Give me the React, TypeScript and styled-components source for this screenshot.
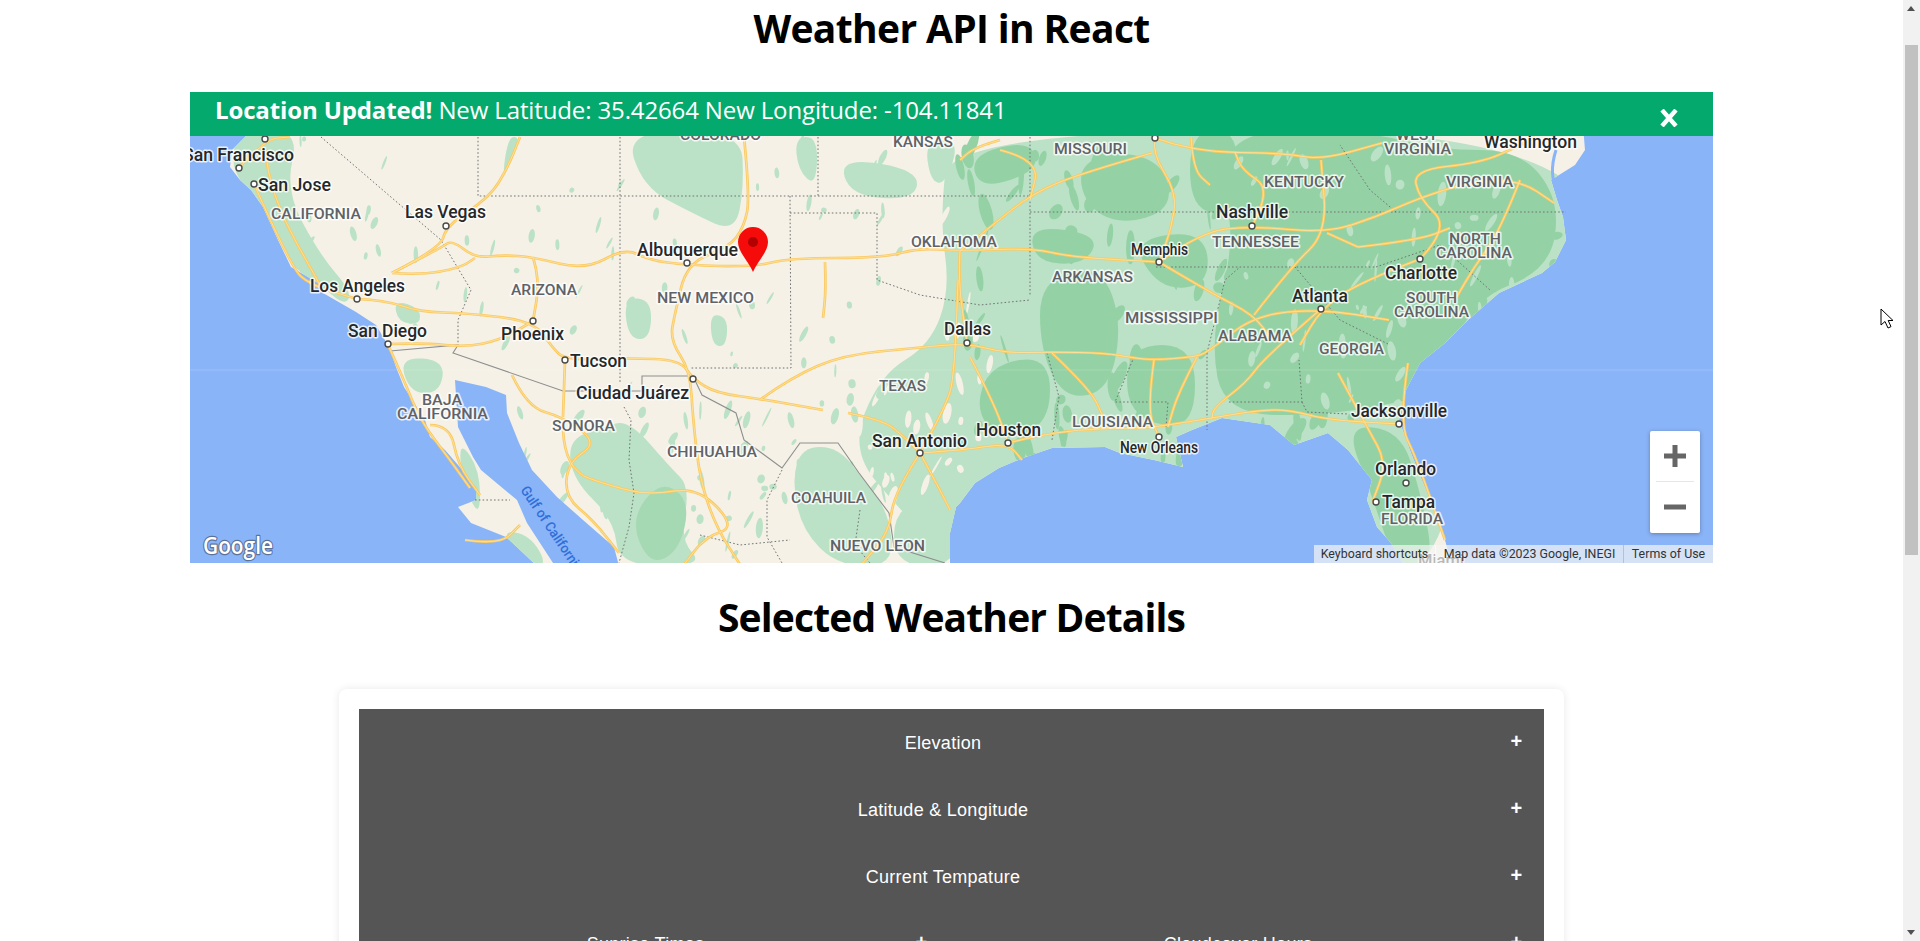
import React from "react";
import styled, { createGlobalStyle } from "styled-components";

type P = [number, number];

const Global = createGlobalStyle`
  html, body { margin: 0; padding: 0; height: 100%; overflow: hidden; background: #fff; }
  #root { height: 100%; }
`;

const Screen = styled.div`
  position: relative;
  display: flex;
  width: 1920px;
  height: 941px;
  overflow: hidden;
`;
const Page = styled.main`
  width: 1903px;
  height: 941px;
  overflow: hidden;
  display: flex;
  flex-direction: column;
  align-items: center;
  font-family: "Open Sans", "Noto Sans", sans-serif;
  color: #000;
`;
const Title = styled.h1`
  flex: none;
  margin: 0;
  height: 92px;
  padding-top: 2px;
  box-sizing: border-box;
  font-size: 39px;
  line-height: 52px;
  font-weight: 700;
  letter-spacing: -0.65px;
`;
const MapFrame = styled.section`
  position: relative;
  width: 1523px;
  height: 471px;
  flex: none;
  overflow: hidden;
`;
const MapCanvas = styled.svg`
  display: block;
  width: 1523px;
  height: 471px;
`;
const Banner = styled.div`
  position: absolute;
  inset: 0 0 auto 0;
  height: 44px;
  background: #04aa6d;
  color: #fff;
  font-size: 24px;
  line-height: 36px;
  padding-left: 25px;
  letter-spacing: -0.13px;
  white-space: pre;
  strong { font-weight: 700; letter-spacing: -0.13px; }
`;
const CloseIcon = styled.svg`
  position: absolute;
  right: 34px;
  top: 17px;
  width: 20px;
  height: 18px;
`;
const Zoom = styled.div`
  position: absolute;
  right: 13px;
  top: 339px;
  width: 50px;
  height: 102px;
  background: #fff;
  border-radius: 2px;
  box-shadow: 0 1px 4px rgba(0, 0, 0, 0.3);
  display: flex;
  flex-direction: column;
  align-items: center;
`;
const ZoomKey = styled.svg`
  width: 50px;
  height: 50px;
  flex: none;
`;
const ZoomRule = styled.div`
  width: 38px;
  height: 1px;
  background: #e6e6e6;
  flex: none;
`;
const Attribution = styled.div`
  position: absolute;
  right: 0;
  bottom: 0;
  height: 18px;
  display: flex;
  background: rgba(245, 245, 245, 0.7);
  font-family: Roboto, "Liberation Sans", sans-serif;
  font-size: 12.4px;
  line-height: 18px;
  color: #333;
  white-space: nowrap;
`;
const AttrItem = styled.span<{ $w: number; $rule?: string }>`
  width: ${(p) => p.$w}px;
  text-align: center;
  border-right: ${(p) => (p.$rule ? `1px solid ${p.$rule}` : "none")};
  box-sizing: border-box;
`;
const SectionTitle = styled.h2`
  flex: none;
  margin: 0;
  height: 126px;
  padding-top: 28px;
  box-sizing: border-box;
  font-size: 39px;
  line-height: 52px;
  font-weight: 700;
  letter-spacing: -0.85px;
`;
const Card = styled.section`
  width: 1225px;
  flex: none;
  box-sizing: border-box;
  padding: 20px;
  background: #fff;
  border-radius: 8px;
  box-shadow: 0 0 8px rgba(0, 0, 0, 0.09);
`;
const Accordion = styled.div`
  display: grid;
  grid-template-columns: 590px 595px;
`;
const AccordionRow = styled.button<{ $wide?: boolean }>`
  grid-column: ${(p) => (p.$wide ? "1 / -1" : "auto")};
  height: 67px;
  border: 0;
  margin: 0;
  background: #555;
  color: #fff;
  font-family: "Liberation Sans", Arial, sans-serif;
  font-size: 18px;
  letter-spacing: 0.28px;
  display: flex;
  align-items: center;
  padding: 1px 0 0;
`;
const RowLabel = styled.span`
  flex: 1;
  text-align: center;
`;
const RowPlus = styled.span`
  width: 17px;
  text-align: left;
  font-weight: 700;
  font-size: 20px;
  line-height: 20px;
  transform: translate(-16.5px, -2px);
`;
const Scrollbar = styled.aside`
  position: relative;
  width: 17px;
  height: 941px;
  flex: none;
  background: #f1f1f1;
`;
const ScrollThumb = styled.div`
  position: absolute;
  left: 2px;
  top: 45px;
  width: 13px;
  height: 510px;
  background: #c1c1c1;
`;
const ScrollArrow = styled.div<{ $down?: boolean }>`
  position: absolute;
  left: 4px;
  ${(p) => (p.$down ? "bottom: 6px;" : "top: 6px;")}
  width: 0;
  height: 0;
  border-left: 4.5px solid transparent;
  border-right: 4.5px solid transparent;
  ${(p) => (p.$down ? "border-top: 5px solid #505050;" : "border-bottom: 5px solid #505050;")}
`;
const Cursor = styled.svg`
  position: absolute;
  left: 1880px;
  top: 308px;
  width: 14px;
  height: 21px;
`;
const Label = styled.text<{ $k: "city" | "state" | "small" }>`
  font-family: Roboto, "Liberation Sans", sans-serif;
  font-weight: 500;
  font-size: ${(p) => (p.$k === "city" ? 18 : p.$k === "small" ? 16 : 14)}px;
  fill: ${(p) => (p.$k === "state" ? "#5f6266" : "#25282b")};
  stroke: rgba(255, 255, 255, 0.8);
  stroke-width: 3px;
  paint-order: stroke;
  stroke-linejoin: round;
`;
const GulfLabel = styled.text`
  font-family: Roboto, "Liberation Sans", sans-serif;
  font-size: 14px;
  font-weight: 500;
  fill: #2f6fd8;
`;
const GoogleMark = styled.text`
  font-family: "Open Sans", Roboto, sans-serif;
  font-size: 24px;
  font-weight: 600;
  fill: #fff;
  stroke: #5a7199;
  stroke-width: 2.4px;
  paint-order: stroke;
  stroke-linejoin: round;
`;

const smooth = (pts: P[], closed = false) => {
  const mid = (a: P, b: P): P => [(a[0] + b[0]) / 2, (a[1] + b[1]) / 2];
  if (closed) {
    const s = mid(pts[pts.length - 1], pts[0]);
    let d = `M${s[0]} ${s[1]}`;
    pts.forEach((p, i) => {
      const m = mid(p, pts[(i + 1) % pts.length]);
      d += `Q${p[0]} ${p[1]} ${m[0]} ${m[1]}`;
    });
    return d + "Z";
  }
  let d = `M${pts[0][0]} ${pts[0][1]}`;
  for (let i = 1; i < pts.length - 1; i++) {
    const m = mid(pts[i], pts[i + 1]);
    d += `Q${pts[i][0]} ${pts[i][1]} ${m[0]} ${m[1]}`;
  }
  const l = pts[pts.length - 1];
  return d + `L${l[0]} ${l[1]}`;
};
const poly = (pts: P[]) => "M" + pts.map((p) => p.join(" ")).join("L");
const shape = (pts: P[]) => poly(pts) + "Z";

const land: P[] = [
  [245, 90], [245, 137], [232, 150], [230, 167], [240, 180], [251, 190], [263, 207], [278, 240], [291, 267], [318, 283], [323, 293], [356, 312], [376, 325],
  [389, 347], [396, 367], [404, 387], [425, 420], [430, 437], [445, 450], [458, 465], [476, 487], [476, 500], [458, 507], [471, 523], [506, 537], [537, 566],
  [950, 566], [950, 533], [956, 507], [960, 503], [975, 483], [999, 468], [1023, 458], [1052, 448], [1105, 447], [1120, 453], [1154, 460],
  [1183, 467], [1176, 437], [1192, 430], [1222, 418], [1270, 425], [1294, 445], [1328, 433], [1348, 450], [1372, 480], [1367, 500], [1377, 527],
  [1391, 543], [1405, 566], [1452, 566], [1445, 540], [1430, 500], [1411, 453], [1399, 420], [1406, 390], [1420, 363], [1445, 343], [1468, 320],
  [1499, 293], [1542, 273], [1555, 262], [1566, 240], [1563, 217], [1557, 200], [1551, 180], [1575, 165], [1585, 150], [1580, 90],
];
const gulf: P[] = [
  [455, 380], [486, 387], [506, 395], [507, 413], [519, 443], [532, 470], [557, 497], [583, 520], [614, 547], [619, 566],
  [555, 566], [527, 523], [517, 500], [481, 470], [473, 457], [458, 427],
];

const lightAreas: P[][] = [
  [[238, 130], [300, 130], [285, 190], [320, 255], [352, 292], [345, 306], [318, 283], [291, 267], [263, 207], [230, 170]],
  [[625, 130], [741, 130], [744, 187], [735, 233], [692, 213], [643, 187]],
  [[568, 440], [603, 427], [629, 420], [670, 467], [690, 487], [680, 540], [705, 566], [619, 566], [614, 520], [573, 480]],
  [[802, 447], [838, 447], [864, 480], [889, 513], [894, 566], [838, 566], [802, 530], [792, 480]],
  [[894, 505], [960, 490], [960, 566], [894, 566]],
  [[399, 357], [445, 360], [440, 393], [410, 393]],
  [[394, 300], [420, 308], [420, 325], [398, 322]],
  [[710, 313], [728, 318], [726, 347], [712, 345]],
  [[624, 297], [652, 300], [650, 340], [628, 338]],
  [[508, 137], [520, 137], [512, 160], [502, 180]],
  [[795, 137], [818, 137], [816, 187], [798, 170]],
  [[839, 157], [919, 170], [915, 200], [850, 196]],
  [[459, 440], [480, 470], [480, 520], [462, 480]],
  [[500, 530], [530, 535], [548, 566], [525, 566]],
  [[925, 140], [960, 140], [945, 185], [930, 180]],
];
const eastLight: P[] = [
  [950, 130], [1600, 130], [1600, 350], [1470, 380], [1440, 566], [1370, 566], [1360, 490], [1100, 480], [1000, 480], [956, 566], [900, 510], [850, 450],
  [880, 375], [930, 345], [950, 290], [940, 220],
];
const eastDark: P[][] = [
  [[1240, 130], [1360, 130], [1440, 150], [1520, 150], [1560, 200], [1550, 270], [1470, 300], [1440, 390], [1410, 400], [1330, 415], [1225, 415], [1210, 340], [1235, 240], [1220, 180]],
  [[1078, 165], [1120, 150], [1165, 165], [1172, 210], [1120, 225], [1085, 205]],
  [[1040, 280], [1100, 265], [1122, 320], [1110, 390], [1065, 400], [1040, 350]],
  [[990, 365], [1050, 355], [1050, 425], [1000, 440], [975, 410]],
  [[1130, 345], [1195, 345], [1195, 425], [1150, 425], [1125, 400]],
  [[1345, 425], [1400, 430], [1420, 490], [1435, 566], [1395, 566], [1370, 490]],
  [[1130, 240], [1205, 230], [1210, 285], [1160, 290]],
  [[970, 155], [1030, 140], [1040, 170], [980, 190]],
  [[1030, 225], [1100, 235], [1085, 265], [1035, 262]],
  [[1190, 130], [1240, 130], [1235, 215], [1190, 210]],
];

const roads: P[][] = [
  [[392, 273], [441, 248], [452, 240], [475, 258], [502, 255], [533, 257], [585, 270], [625, 248], [649, 260], [686, 265], [753, 267], [790, 258], [882, 258], [919, 248], [960, 251], [1033, 248], [1070, 257], [1159, 262]],
  [[392, 273], [420, 275], [460, 268], [475, 258]],
  [[1159, 262], [1200, 232], [1252, 226], [1327, 233], [1376, 217], [1419, 198], [1470, 182], [1520, 180], [1554, 203]],
  [[392, 273], [441, 248], [446, 226], [490, 197], [508, 167], [520, 137]],
  [[357, 299], [384, 300], [420, 312], [466, 313], [533, 321], [552, 347], [565, 360], [629, 358], [680, 360], [693, 379], [716, 393], [761, 399], [823, 410]],
  [[848, 413], [884, 420], [904, 437], [920, 453]],
  [[761, 399], [792, 377], [843, 355], [915, 348], [967, 343], [1004, 353], [1052, 352], [1105, 353], [1134, 358], [1154, 360], [1193, 357], [1207, 353], [1254, 315], [1321, 309], [1389, 320]],
  [[388, 344], [425, 343], [466, 347], [501, 340], [533, 321]],
  [[744, 137], [750, 197], [744, 227], [729, 247], [687, 263], [675, 313], [670, 340], [690, 370], [693, 420], [700, 480], [716, 527], [741, 566]],
  [[563, 430], [565, 470], [614, 487], [650, 495], [698, 487], [736, 527], [705, 537], [683, 566]],
  [[512, 375], [527, 407], [563, 417], [598, 443], [568, 462], [565, 497], [593, 520], [619, 553]],
  [[565, 360], [563, 417]],
  [[920, 453], [894, 493], [889, 533], [860, 566]],
  [[958, 280], [955, 377], [945, 407], [920, 453]],
  [[960, 251], [958, 280], [967, 343]],
  [[920, 453], [940, 490], [950, 510]],
  [[1008, 443], [1057, 430], [1144, 428], [1168, 425], [1212, 418], [1260, 410], [1290, 410], [1328, 420], [1399, 424]],
  [[920, 453], [965, 450], [1008, 443], [1022, 460]],
  [[1052, 353], [1091, 390], [1103, 417]],
  [[1154, 360], [1147, 410], [1159, 437]],
  [[1197, 357], [1178, 393], [1168, 427]],
  [[1321, 309], [1265, 357], [1246, 383], [1214, 407], [1212, 418]],
  [[1338, 373], [1367, 427], [1387, 463], [1372, 503]],
  [[1408, 363], [1399, 423], [1416, 457], [1445, 540]],
  [[970, 357], [994, 403], [1008, 443]],
  [[1159, 262], [1211, 293], [1254, 315], [1272, 340]],
  [[1254, 315], [1291, 267], [1327, 233], [1321, 160]],
  [[1420, 259], [1358, 283], [1321, 309], [1300, 345]],
  [[1420, 259], [1450, 228], [1419, 198], [1413, 170], [1480, 163], [1517, 147], [1535, 137]],
  [[1520, 180], [1499, 233], [1474, 267], [1455, 300]],
  [[1155, 138], [1193, 152], [1285, 153], [1321, 160], [1382, 143]],
  [[1191, 137], [1193, 170], [1210, 185]],
  [[1252, 226], [1272, 190], [1242, 170], [1235, 152]],
  [[1155, 138], [1152, 153], [1177, 193], [1171, 230], [1159, 262]],
  [[1152, 153], [1082, 173], [1033, 193], [990, 227], [960, 251]],
  [[1358, 247], [1419, 240], [1450, 228]],
  [[1358, 247], [1327, 233]],
  [[1000, 140], [975, 147], [960, 160]],
  [[239, 168], [265, 139], [290, 137]],
  [[254, 184], [291, 267], [310, 285], [357, 299]],
  [[265, 150], [270, 195], [320, 285]],
  [[389, 347], [404, 380], [420, 420], [450, 460], [470, 488]],
  [[430, 425], [450, 425], [458, 465], [480, 495]],
  [[465, 540], [500, 545], [520, 525]],
  [[533, 257], [540, 280], [533, 321]],
  [[825, 262], [826, 290], [823, 318]],
  [[1000, 150], [1040, 160], [1030, 200]],
];

const dotted: P[][] = [
  [[321, 137], [441, 240], [471, 290], [458, 320], [458, 343]],
  [[478, 137], [478, 196], [1033, 196]],
  [[620, 137], [620, 382]],
  [[818, 137], [818, 196]],
  [[790, 196], [791, 368], [690, 368]],
  [[790, 213], [877, 213], [877, 280], [920, 295], [980, 305], [1030, 300]],
  [[1030, 137], [1030, 295]],
  [[1030, 212], [1566, 212]],
  [[1156, 267], [1376, 267]],
  [[1047, 353], [1059, 397], [1052, 440]],
  [[1134, 357], [1115, 402], [1168, 402], [1166, 427]],
  [[1207, 353], [1207, 430]],
  [[1229, 402], [1302, 402], [1299, 360]],
  [[1302, 402], [1307, 412], [1348, 414]],
  [[1207, 353], [1225, 280], [1240, 267]],
  [[1295, 267], [1340, 320], [1390, 345]],
  [[1376, 267], [1440, 245], [1490, 290]],
  [[1396, 212], [1370, 190], [1340, 145]],
  [[624, 407], [631, 420], [629, 460], [634, 493], [629, 527], [619, 563]],
  [[782, 470], [767, 500], [767, 537], [782, 563]],
  [[475, 500], [510, 500]],
  [[700, 535], [740, 545], [790, 540]],
  [[860, 510], [855, 545], [870, 563]],
];
const national: P[] = [
  [390, 351], [458, 345], [453, 353], [563, 391], [629, 391], [642, 391], [642, 376], [693, 376], [702, 395], [736, 413], [744, 440], [782, 468], [800, 443], [838, 443], [859, 473], [889, 513], [894, 547], [945, 563],
];

const dots: P[] = [
  [265, 139], [239, 168], [254, 184], [446, 226], [357, 299], [687, 263], [533, 321], [388, 344], [565, 360], [693, 379], [967, 343], [920, 453], [1008, 443],
  [1159, 437], [1399, 424], [1406, 483], [1376, 502], [1321, 309], [1420, 259], [1252, 226], [1159, 262], [1155, 138],
];

type L = [string, number, number, number, "city" | "state" | "small"];
const labels: L[] = [
  ["San Francisco", 183, 294, 161, "city"], ["San Jose", 258, 331, 191, "city"], ["CALIFORNIA", 271, 361, 219, "state"], ["Las Vegas", 405, 486, 218, "city"],
  ["Albuquerque", 637, 738, 256, "city"], ["Los Angeles", 310, 405, 292, "city"], ["ARIZONA", 511, 577, 295, "state"], ["NEW MEXICO", 657, 754, 303, "state"],
  ["COLORADO", 680, 761, 140, "state"], ["KANSAS", 893, 953, 147, "state"], ["OKLAHOMA", 911, 997, 247, "state"], ["MISSOURI", 1054, 1127, 154, "state"],
  ["WEST", 1396, 1438, 140, "state"], ["VIRGINIA", 1384, 1451, 154, "state"], ["Washington", 1484, 1577, 148, "city"], ["KENTUCKY", 1264, 1344, 187, "state"],
  ["VIRGINIA", 1446, 1513, 187, "state"], ["Nashville", 1216, 1288, 218, "city"], ["TENNESSEE", 1212, 1299, 247, "state"], ["Memphis", 1131, 1188, 255, "small"],
  ["NORTH", 1449, 1501, 244, "state"], ["CAROLINA", 1436, 1512, 258, "state"], ["ARKANSAS", 1052, 1133, 282, "state"], ["Charlotte", 1385, 1457, 279, "city"],
  ["Atlanta", 1292, 1348, 302, "city"], ["SOUTH", 1406, 1457, 303, "state"], ["CAROLINA", 1394, 1469, 317, "state"], ["MISSISSIPPI", 1125, 1218, 323, "state"],
  ["ALABAMA", 1218, 1292, 341, "state"], ["Dallas", 944, 991, 335, "city"], ["San Diego", 348, 427, 337, "city"], ["Phoenix", 501, 564, 340, "city"],
  ["Tucson", 570, 627, 367, "city"], ["Ciudad Juárez", 576, 689, 399, "city"], ["TEXAS", 879, 926, 391, "state"], ["BAJA", 422, 462, 405, "state"],
  ["CALIFORNIA", 397, 488, 419, "state"], ["SONORA", 552, 615, 431, "state"], ["CHIHUAHUA", 667, 757, 457, "state"], ["San Antonio", 872, 967, 447, "city"],
  ["COAHUILA", 791, 866, 503, "state"], ["NUEVO LEON", 830, 925, 551, "state"], ["GEORGIA", 1319, 1384, 354, "state"], ["Houston", 976, 1041, 436, "city"],
  ["LOUISIANA", 1072, 1153, 427, "state"], ["New Orleans", 1120, 1198, 453, "small"], ["Jacksonville", 1351, 1447, 417, "city"], ["Orlando", 1375, 1436, 475, "city"],
  ["Tampa", 1382, 1435, 508, "city"], ["FLORIDA", 1381, 1443, 524, "state"], ["Miami", 1418, 1464, 566, "small"],
];

const scatter = (seed: number, n: number, x0: number, x1: number, y0: number, y1: number, big: number) => {
  let s = seed;
  const r = () => {
    s = (s * 16807) % 2147483647;
    return s / 2147483647;
  };
  return Array.from({ length: n }, () => ({
    cx: x0 + r() * (x1 - x0),
    cy: y0 + r() * (y1 - y0),
    rx: 1 + r() * big * 0.7,
    ry: 2.5 + r() * big * 2,
    a: r() * 60 - 20,
  }));
};

const Spots = ({ fill, list }: { fill: string; list: ReturnType<typeof scatter> }) => (
  <g fill={fill}>
    {list.map((e, i) => (
      <ellipse key={i} cx={e.cx} cy={e.cy} rx={e.rx} ry={e.ry} transform={`rotate(${e.a} ${e.cx} ${e.cy})`} />
    ))}
  </g>
);

const MapArt = () => (
  <MapCanvas viewBox="190 92 1523 471">
    <defs>
      <clipPath id="land">
        <path d={shape(land)} />
      </clipPath>
    </defs>
    <rect x="190" y="92" width="1523" height="471" fill="#8ab4f8" />
    <path d={shape(land)} fill="#f5f1e6" />
    <g clipPath="url(#land)">
      <path d={smooth(eastLight, true)} fill="#bbe2c6" />
      {lightAreas.map((a, i) => (
        <path key={i} d={smooth(a, true)} fill="#bbe2c6" />
      ))}
      <Spots fill="#f5f1e6" list={scatter(211, 40, 860, 990, 200, 500, 5)} />
      <Spots fill="#bbe2c6" list={scatter(11, 60, 300, 930, 137, 345, 3)} />
      <Spots fill="#bbe2c6" list={scatter(29, 50, 700, 960, 340, 560, 4)} />
      <Spots fill="#bbe2c6" list={scatter(47, 30, 520, 720, 380, 560, 4)} />
      {eastDark.map((a, i) => (
        <path key={i} d={smooth(a, true)} fill="#94d2a5" />
      ))}
      <Spots fill="#94d2a5" list={scatter(83, 150, 960, 1560, 137, 470, 8)} />
      <Spots fill="#bbe2c6" list={scatter(131, 70, 1230, 1540, 150, 420, 5)} />
      <path d={smooth([[660, 480], [690, 500], [680, 550], [650, 566], [630, 520]], true)} fill="#a5d9b3" />
    </g>
    <path d={shape(gulf)} fill="#8ab4f8" />
    <path d="M1556 150Q1548 175 1558 192" fill="none" stroke="#8ab4f8" strokeWidth="3" />
    <path d="M190 370H1713" stroke="#fff" strokeOpacity="0.16" strokeWidth="1" />
    {dotted.map((d, i) => (
      <path key={i} d={poly(d)} fill="none" stroke="#6f7374" strokeWidth="1" strokeDasharray="1.6 2.2" />
    ))}
    <path d={poly(national)} fill="none" stroke="#8d8f8f" strokeWidth="1.1" />
    {roads.map((d, i) => (
      <path key={i} d={smooth(d)} fill="none" stroke="#fbc95f" strokeWidth="2.7" strokeLinejoin="round" />
    ))}
    {roads.map((d, i) => (
      <path key={i} d={smooth(d)} fill="none" stroke="#fde2a0" strokeWidth="0.9" strokeLinejoin="round" />
    ))}
    {dots.map((d, i) => (
      <circle key={i} cx={d[0]} cy={d[1]} r="3" fill="#fff" stroke="#4a4a4a" strokeWidth="1.4" />
    ))}
    {labels.map(([t, a, b, y, k], i) => (
      <Label key={i} $k={k} x={a} y={y} textLength={b - a} lengthAdjust="spacingAndGlyphs">
        {t}
      </Label>
    ))}
    <GulfLabel x="520" y="490" textLength="100" lengthAdjust="spacingAndGlyphs" transform="rotate(56 520 490)">
      Gulf of California
    </GulfLabel>
    <GoogleMark x="203" y="554" textLength="70" lengthAdjust="spacingAndGlyphs">
      Google
    </GoogleMark>
    <path d="M753 272C749 262 738 252 738 242a15 15 0 0 1 30 0C768 252 757 262 753 272Z" fill="#f60b0b" />
    <circle cx="753" cy="242" r="5" fill="#b30000" />
  </MapCanvas>
);

const Row = ({ label, wide }: { label: string; wide?: boolean }) => (
  <AccordionRow $wide={wide}>
    <RowLabel>{label}</RowLabel>
    <RowPlus>+</RowPlus>
  </AccordionRow>
);

export default function App() {
  return (
    <Screen>
      <Global />
      <Page>
        <Title>Weather API in React</Title>
        <MapFrame>
          <MapArt />
          <Banner>
            <strong>Location Updated!</strong> New Latitude: 35.42664 New Longitude: -104.11841
            <CloseIcon viewBox="0 0 20 18">
              <path d="M3 1L17 17M17 1L3 17" stroke="#fff" strokeWidth="4.4" fill="none" />
            </CloseIcon>
          </Banner>
          <Zoom>
            <ZoomKey viewBox="0 0 50 50">
              <path d="M25 14V36M14 25H36" stroke="#666" strokeWidth="5" />
            </ZoomKey>
            <ZoomRule />
            <ZoomKey viewBox="0 0 50 50">
              <path d="M14 25H36" stroke="#666" strokeWidth="5" />
            </ZoomKey>
          </Zoom>
          <Attribution>
            <AttrItem $w={122} $rule="rgba(255,255,255,.5)">Keyboard shortcuts</AttrItem>
            <AttrItem $w={188} $rule="#a7c2ef">Map data ©2023 Google, INEGI</AttrItem>
            <AttrItem $w={89}>Terms of Use</AttrItem>
          </Attribution>
        </MapFrame>
        <SectionTitle>Selected Weather Details</SectionTitle>
        <Card>
          <Accordion>
            <Row wide label="Elevation" />
            <Row wide label="Latitude & Longitude" />
            <Row wide label="Current Tempature" />
            <Row label="Sunrise Times" />
            <Row label="Cloudcover Hours" />
          </Accordion>
        </Card>
      </Page>
      <Scrollbar>
        <ScrollArrow />
        <ScrollThumb />
        <ScrollArrow $down />
      </Scrollbar>
      <Cursor viewBox="0 0 14 21">
        <path d="M1 1V17L5 13.5L8 20L11 18.6L8.2 12.5H13Z" fill="#fff" stroke="#000" strokeWidth="1" />
      </Cursor>
    </Screen>
  );
}
